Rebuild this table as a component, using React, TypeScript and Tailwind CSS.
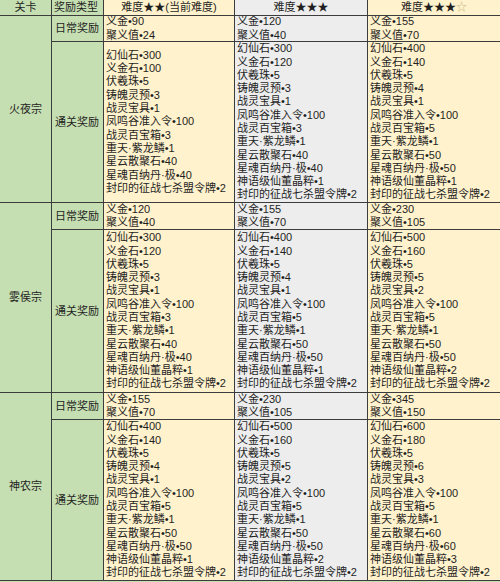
import React from "react";

type Group = {
  name: string;
  daily: string[][];
  clear: string[][];
};

const names = [
  "幻仙石",
  "义金石",
  "伏羲珠",
  "铸魄灵预",
  "战灵宝具",
  "凤鸣谷准入令",
  "战灵百宝箱",
  "重天·紫龙鳞",
  "星云散聚石",
  "星魂百纳丹·极",
  "神语级仙董晶粹",
  "封印的征战七杀盟令牌",
];

// null = item not given at this difficulty
const items = (a: (string | null)[]) => {
  const out: string[] = [];
  names.forEach((n, i) => {
    if (a[i] !== null) out.push(`${n}•${a[i]}`);
  });
  return out;
};

const daily = (gold: string, val: string) => [`义金•${gold}`, `聚义值•${val}`];

const groups: Group[] = [
  {
    name: "火夜宗",
    daily: [daily("90", "24"), daily("120", "40"), daily("155", "70")],
    clear: [
      items(["300", "100", "5", "3", "1", "100", "3", "1", "40", "40", null, "2"]),
      items(["300", "120", "5", "3", "1", "100", "3", "1", "40", "40", "1", "2"]),
      items(["400", "140", "5", "4", "1", "100", "5", "1", "50", "50", "1", "2"]),
    ],
  },
  {
    name: "雾侯宗",
    daily: [daily("120", "40"), daily("155", "70"), daily("230", "105")],
    clear: [
      items(["300", "120", "5", "3", "1", "100", "3", "1", "40", "40", "1", "2"]),
      items(["400", "140", "5", "4", "1", "100", "5", "1", "50", "50", "1", "2"]),
      items(["500", "160", "5", "5", "2", "100", "5", "1", "50", "50", "2", "2"]),
    ],
  },
  {
    name: "神农宗",
    daily: [daily("155", "70"), daily("230", "105"), daily("345", "150")],
    clear: [
      items(["400", "140", "5", "4", "1", "100", "5", "1", "50", "50", "1", "2"]),
      items(["500", "160", "5", "5", "2", "100", "5", "1", "50", "50", "2", "2"]),
      items(["600", "180", "5", "6", "3", "100", "5", "1", "60", "60", "3", "2"]),
    ],
  },
];

const colBg = ["bg-[#fff2cc]", "bg-[#ededed]", "bg-[#fff2cc]"];
const green = "bg-[#c6dfb2]";

function Lines({ lines, bg }: { lines: string[]; bg: string }) {
  return (
    <div className={`${bg} flex flex-col justify-center pl-[2px] overflow-hidden`}>
      {lines.map((l, i) => (
        <div key={i} className="h-[13.3px] whitespace-nowrap leading-[13.3px]">
          {l}
        </div>
      ))}
    </div>
  );
}

export default function App() {
  return (
    <div className={`w-[500px] h-[582px] ${green} font-['Liberation_Sans','Noto_Sans_CJK_SC',sans-serif] text-[11px] leading-[13px] text-[#1f1f1f]`}>
      <div className="grid grid-cols-[51px_51px_130px_132px_132px] grid-rows-[15px_25px_160px_26px_162px_26px_160px] gap-px bg-[#3c3c3c] border-b border-[#3c3c3c]">
        <div className={`${green} flex items-center justify-center`}>关卡</div>
        <div className={`${green} flex items-center pl-[2px] whitespace-nowrap`}>奖励类型</div>
        <div className="bg-[#fff2cc] flex items-center justify-center whitespace-nowrap">难度★★(当前难度)</div>
        <div className="bg-[#ededed] flex items-center justify-center">难度★★★</div>
        <div className="bg-[#fff2cc] flex items-center justify-center">
          难度★★★<span className="text-[#c8b98a]">☆</span>
        </div>

        {groups.map((g) => (
          <React.Fragment key={g.name}>
            <div className={`${green} row-span-2 flex items-center justify-center`}>{g.name}</div>
            <div className={`${green} flex items-center pl-[3px] whitespace-nowrap`}>日常奖励</div>
            {g.daily.map((d, ci) => (
              <Lines key={`d${ci}`} lines={d} bg={colBg[ci]} />
            ))}
            <div className={`${green} flex items-center pl-[3px] whitespace-nowrap`}>通关奖励</div>
            {g.clear.map((d, ci) => (
              <Lines key={`c${ci}`} lines={d} bg={colBg[ci]} />
            ))}
          </React.Fragment>
        ))}
      </div>
    </div>
  );
}
